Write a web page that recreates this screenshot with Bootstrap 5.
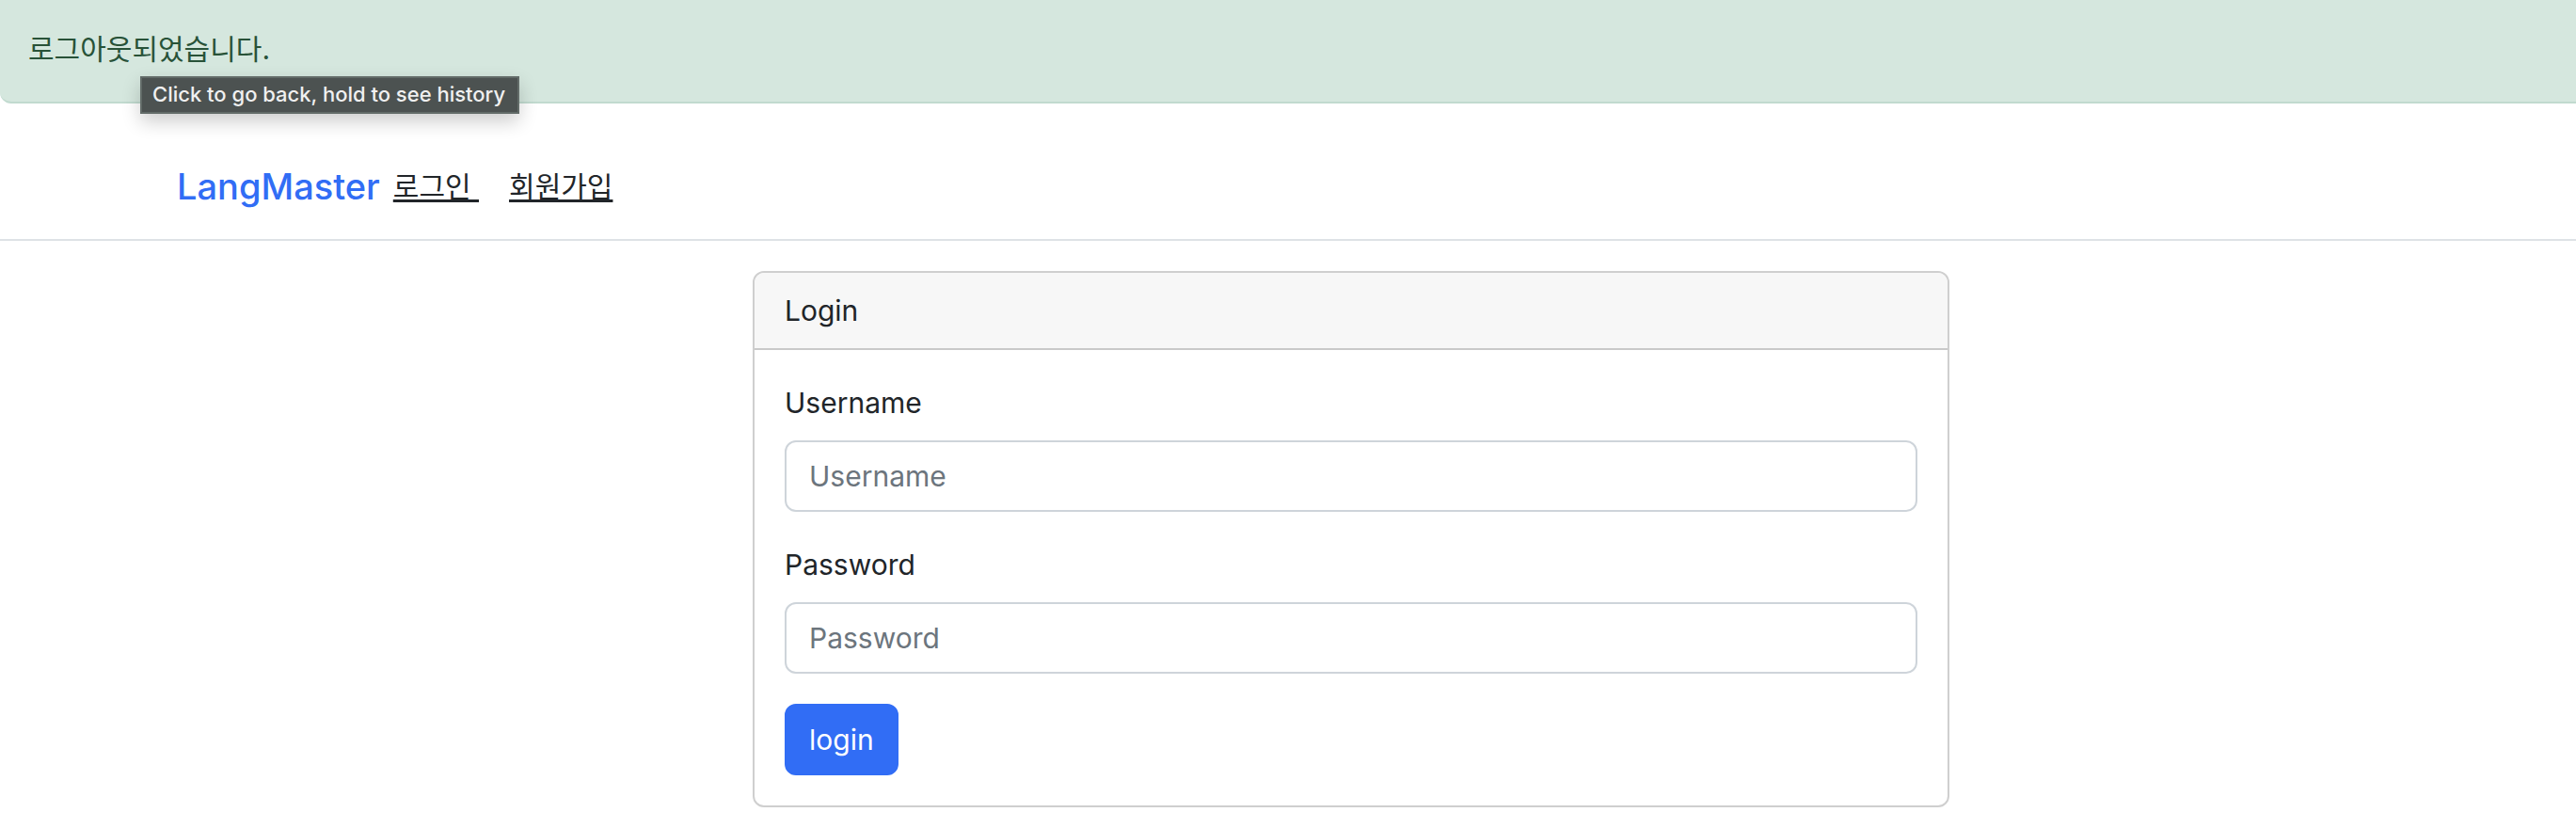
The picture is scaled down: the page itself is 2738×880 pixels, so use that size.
<!DOCTYPE html>
<html lang="ko">
<head>
<meta charset="utf-8">
<meta name="viewport" content="width=device-width, initial-scale=1">
<title>LangMaster</title>
<link href="https://cdn.jsdelivr.net/npm/bootstrap@5.3.0/dist/css/bootstrap.min.css" rel="stylesheet">
<style>
  html { font-size: 32px; }
  body { font-family: Inter, "Noto Sans CJK KR", sans-serif; font-size: 30px; line-height: 48px; color: #212529; }
  .notice { padding: 28px 30px 32px; color: #285238; background: #d5e7de; border: 0 solid #c1dacf; border-bottom-width: 2px; border-radius: 0 0 0 12px; }
  .hint { top: 81px; left: 149px; padding: 0 13px 2px 11px; font-size: 22px; font-weight: 500; line-height: 34px; color: #f0f0f0; background: #4c5251; border: 2px solid #626b68; box-shadow: 0 8px 20px rgba(0, 0, 0, .2); z-index: 10; }
  .site-nav { padding: 29px 188px; border-bottom: 2px solid #dee2e6; }
  .site-nav .navbar-brand { margin: 0 14px 0 0; padding: 0; font-size: 38px; font-weight: 500; line-height: 54px; color: #316df5; }
  .site-nav .menu { gap: 32px; }
  .site-nav .menu a { color: #212529; white-space: pre; text-decoration-thickness: 3px; text-underline-offset: 3px; text-decoration-skip-ink: none; }
  .page-main { padding: 32px 0 22px 134px; }
  .login-card { max-width: 1272px; border: 2px solid #cfcfcf; border-radius: 12px; }
  .login-card .card-header { padding: 16px 32px; background: #f7f7f7; border-bottom: 2px solid #c9c9c9; }
  .login-card .card-body { padding: 32px; }
  .login-card .form-control { padding: 12px 24px; height: 76px; font-size: 30px; border: 2px solid #ced4da; border-radius: 12px; }
  .login-card .form-control::placeholder { color: #6c757d; }
  .login-card .btn-primary { padding: 12px 24px; font-size: 30px; line-height: 48px; border: 2px solid #316df5; background: #316df5; border-radius: 12px; }
</style>
</head>
<body>
<div class="notice mb-3" role="alert">로그아웃되었습니다.</div>
<div class="hint position-absolute text-nowrap" role="tooltip">Click to go back, hold to see history</div>
<nav class="site-nav d-flex align-items-center">
  <a class="navbar-brand" href="#">LangMaster</a>
  <div class="menu d-flex">
    <a href="#">로그인 </a>
    <a href="#">회원가입</a>
  </div>
</nav>
<main class="page-main">
  <div class="card login-card mx-auto">
    <div class="card-header">Login</div>
    <form class="card-body">
      <div class="mb-3">
        <label class="form-label d-block" for="username">Username</label>
        <input class="form-control" type="text" id="username" placeholder="Username">
      </div>
      <div class="mb-3">
        <label class="form-label d-block" for="password">Password</label>
        <input class="form-control" type="password" id="password" placeholder="Password">
      </div>
      <button class="btn btn-primary d-block" type="submit">login</button>
    </form>
  </div>
</main>
<script src="https://cdn.jsdelivr.net/npm/bootstrap@5.3.0/dist/js/bootstrap.bundle.min.js"></script>
</body>
</html>
